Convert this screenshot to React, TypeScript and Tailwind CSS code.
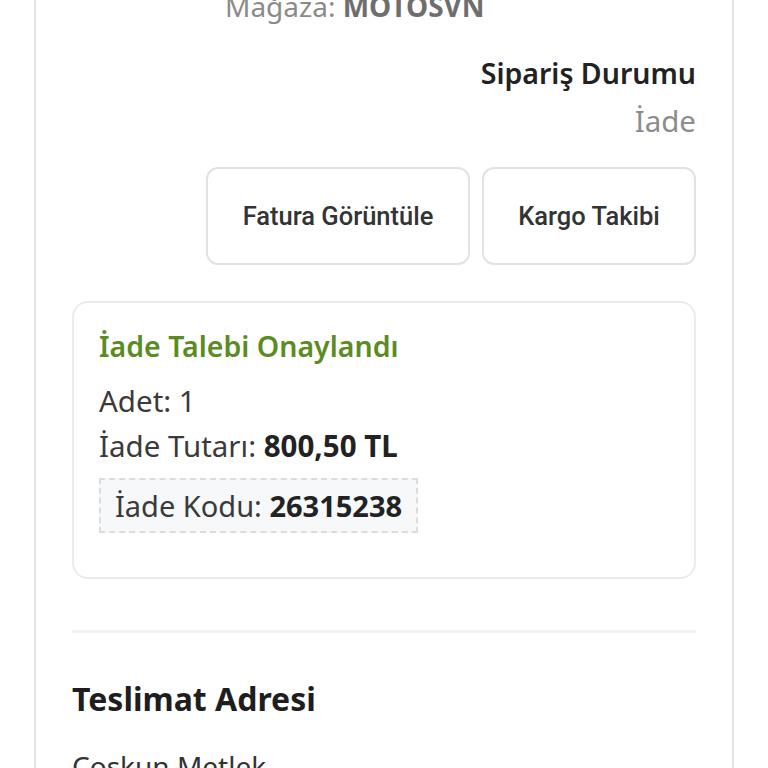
import React from 'react';

const plex = { fontFamily: '"Noto Sans", "Open Sans", sans-serif' };

const App: React.FC = () => {
    return (
        <div className="w-[768px] h-[768px] overflow-hidden bg-white" style={plex}>
            <div className="mx-[34px] -mt-[12px] border-x-2 border-[#e4e4e4] px-[36px] pb-10">
                {/* Store */}
                <div className="pl-[153px] text-[28px] leading-[36px] text-[#8a8a8a]">
                    Mağaza: <span className="font-bold text-[#6e6e6e]">MOTOSVN</span>
                </div>

                {/* Status */}
                <div className="mt-[26px] flex flex-col items-end">
                    <span className="text-[28.5px] leading-[47px] font-semibold text-[#222]">Sipariş Durumu</span>
                    <span className="text-[29.5px] leading-[47px] text-[#8c8c8c]">İade</span>
                </div>

                {/* Actions */}
                <div className="mt-[23px] flex justify-end gap-3" style={{ fontFamily: 'Roboto, sans-serif' }}>
                    <button className="w-[264px] h-[98px] rounded-xl border-2 border-[#e2e2e2] bg-white text-[25.5px] font-medium text-[#333]">
                        Fatura Görüntüle
                    </button>
                    <button className="w-[214px] h-[98px] rounded-xl border-2 border-[#e2e2e2] bg-white text-[25.5px] font-medium text-[#333]">
                        Kargo Takibi
                    </button>
                </div>

                {/* Return info */}
                <div className="mt-[36px] rounded-2xl border-2 border-[#ebebeb] px-[25px] pt-[24px] pb-[44px]">
                    <div className="text-[28.5px] leading-[38px] font-semibold text-[#5b8c1f]">İade Talebi Onaylandı</div>
                    <div className="mt-[17px] text-[29.5px] leading-[38px] text-[#3a3a3a]">Adet: 1</div>
                    <div className="mt-[7px] text-[29.5px] leading-[38px] text-[#3a3a3a]">
                        İade Tutarı: <span className="font-bold text-[#222]">800,50 TL</span>
                    </div>
                    <div className="mt-[13px] inline-flex h-[55px] items-center border-2 border-dashed border-[#dcdcdc] bg-[#f6f8fa] px-[14px] text-[29px] text-[#3a3a3a]">
                        İade Kodu:&nbsp;<span className="font-bold text-[#222]">26315238</span>
                    </div>
                </div>

                <div className="mt-[51px] h-[3px] bg-[#f2f2f2]" />

                {/* Address */}
                <h2 className="mt-[44px] text-[32px] leading-[44px] font-bold text-[#1e1e1e]">Teslimat Adresi</h2>
                <div className="mt-[26px] text-[28px] leading-[38px] text-[#333]">Coşkun Metlek</div>
            </div>
        </div>
    );
};

export default App;
